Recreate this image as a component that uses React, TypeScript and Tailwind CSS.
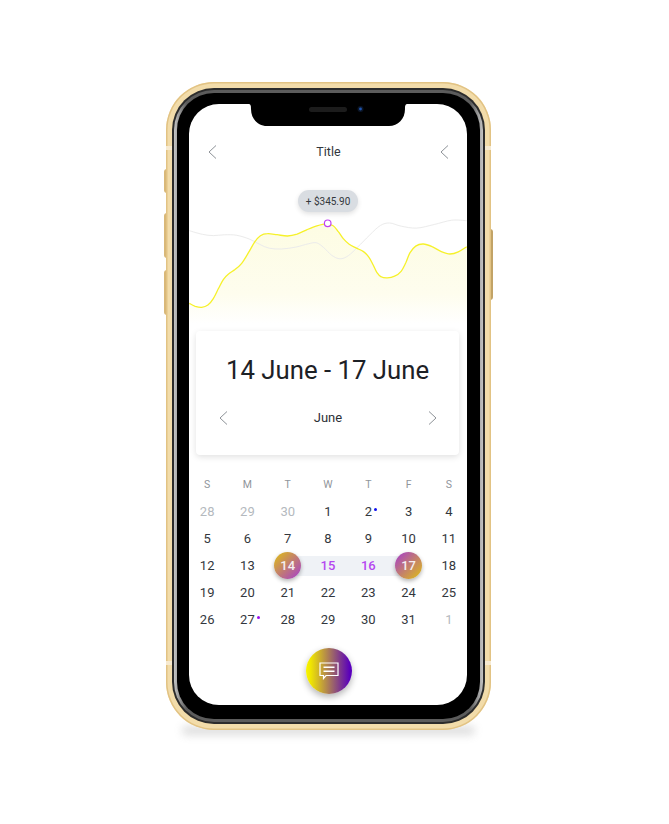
import React from "react";

type P = [number, number];

function smooth(points: P[]): string {
  let d = `M${points[0][0].toFixed(1)} ${points[0][1].toFixed(1)}`;
  for (let i = 0; i < points.length - 1; i++) {
    const p0 = points[Math.max(i - 1, 0)];
    const p1 = points[i];
    const p2 = points[i + 1];
    const p3 = points[Math.min(i + 2, points.length - 1)];
    const c1x = p1[0] + (p2[0] - p0[0]) / 6;
    const c1y = p1[1] + (p2[1] - p0[1]) / 6;
    const c2x = p2[0] - (p3[0] - p1[0]) / 6;
    const c2y = p2[1] - (p3[1] - p1[1]) / 6;
    d += ` C${c1x.toFixed(1)} ${c1y.toFixed(1)} ${c2x.toFixed(1)} ${c2y.toFixed(1)} ${p2[0].toFixed(1)} ${p2[1].toFixed(1)}`;
  }
  return d;
}

const toChart = (pts: P[]): P[] =>
  pts
    .map(([x, y]): P => [x / 3 - 29, y / 3 - 89])
    .map((p, i, a): P =>
      i === 0 || i === a.length - 1
        ? p
        : [0.25 * a[i - 1][0] + 0.5 * p[0] + 0.25 * a[i + 1][0], 0.25 * a[i - 1][1] + 0.5 * p[1] + 0.25 * a[i + 1][1]]
    );

const yellow = toChart([
  [88, 685], [105, 695], [125, 700], [145, 693], [160, 675], [175, 640], [190, 610], [205, 595], [225, 585],
  [245, 570], [265, 535], [285, 495], [300, 480], [320, 473], [350, 478], [385, 487], [410, 480], [440, 463],
  [470, 452], [503, 443], [520, 448], [535, 470], [550, 492], [565, 510], [590, 520], [612, 527], [628, 545],
  [640, 570], [650, 595], [662, 608], [680, 611], [705, 605], [725, 593], [738, 565], [748, 530], [765, 510],
  [790, 503], [815, 512], [845, 533], [870, 541], [895, 533], [920, 515],
]);
const gray = toChart([
  [88, 467], [130, 480], [160, 485], [190, 477], [230, 478], [270, 490], [300, 510], [325, 522], [360, 524],
  [410, 518], [450, 505], [470, 497], [490, 515], [515, 545], [540, 558], [565, 545], [590, 520], [630, 478],
  [665, 445], [685, 438], [720, 455], [770, 466], [820, 450], [880, 428], [920, 437],
]);

function Chev({ dir, className }: { dir: "l" | "r"; className?: string }) {
  return (
    <svg width="9" height="14" viewBox="0 0 9 14" fill="none" className={className}>
      <path d={dir === "l" ? "M8 0.5 L1 7 L8 13.5" : "M1 0.5 L8 7 L1 13.5"} stroke="#8d9297" strokeWidth="1" />
    </svg>
  );
}

function Chart() {
  const y = smooth(yellow);
  return (
    <svg width="278" height="167" viewBox="0 0 278 167" fill="none" className="block">
      <defs>
        <linearGradient id="area" x1="0" y1="0" x2="0" y2="1">
          <stop offset="0" stopColor="#fdfce3" />
          <stop offset="0.7" stopColor="#fefdee" />
          <stop offset="1" stopColor="#ffffff" />
        </linearGradient>
      </defs>
      <path d={`${y} L278.0 160 L0 160 Z`} fill="url(#area)" />
      <path d={smooth(gray)} stroke="#ebebeb" strokeWidth="1" />
      <path d={y} stroke="#f6f12a" strokeWidth="1.3" />
      <circle cx="138.7" cy="59.3" r="3.3" fill="#fff" stroke="#c03ff0" strokeWidth="1.2" />
    </svg>
  );
}

const rows: { t: string; k?: string }[][] = [
  [{ t: "28", k: "mute" }, { t: "29", k: "mute" }, { t: "30", k: "mute" }, { t: "1" }, { t: "2", k: "blue" }, { t: "3" }, { t: "4" }],
  [{ t: "5" }, { t: "6" }, { t: "7" }, { t: "8" }, { t: "9" }, { t: "10" }, { t: "11" }],
  [{ t: "12" }, { t: "13" }, { t: "14", k: "start" }, { t: "15", k: "mid" }, { t: "16", k: "mid" }, { t: "17", k: "end" }, { t: "18" }],
  [{ t: "19" }, { t: "20" }, { t: "21" }, { t: "22" }, { t: "23" }, { t: "24" }, { t: "25" }],
  [{ t: "26" }, { t: "27", k: "purple" }, { t: "28" }, { t: "29" }, { t: "30" }, { t: "31" }, { t: "1", k: "mute" }],
];

function Day({ t, k }: { t: string; k?: string }) {
  if (k === "start" || k === "end") {
    return (
      <div className="relative flex items-center justify-center">
        <div className={k === "start" ? "absolute left-1/2 right-0 top-[3.5px] h-[20px] bg-[#eff2f6]" : "absolute left-0 right-[20px] top-[3.5px] h-[20px] bg-[#eff2f6]"} />
        <div
          className={
            k === "start"
              ? "relative flex h-[27px] w-[27px] items-center justify-center rounded-full bg-[linear-gradient(135deg,#dfc010,#a53bd0)] text-[13px] font-medium text-[#f4eef0] shadow-[0_2px_4px_rgba(0,0,0,0.3)]"
              : "relative flex h-[27px] w-[27px] items-center justify-center rounded-full bg-[linear-gradient(135deg,#a53bd0,#dfc010)] text-[13px] font-medium text-[#f4eef0] shadow-[0_2px_4px_rgba(0,0,0,0.3)]"
          }
        >
          {t}
        </div>
      </div>
    );
  }
  if (k === "mid") {
    return <div className="my-[3.5px] flex items-center justify-center bg-[#eff2f6] text-[13px] font-medium text-[#b548f0]">{t}</div>;
  }
  return (
    <div className={k === "mute" ? "relative flex items-center justify-center text-[13px] text-[#b4b9be]" : "relative flex items-center justify-center text-[13px] font-[450] text-[#33373d]"}>
      <span className="relative">
        {t}
        {k === "blue" && <span className="absolute -right-[5px] top-[6px] h-[3px] w-[3px] rounded-full bg-[#1010f0]" />}
        {k === "purple" && <span className="absolute -right-[5px] top-[6px] h-[3px] w-[3px] rounded-full bg-[#9a10f0]" />}
      </span>
    </div>
  );
}

export default function App() {
  return (
    <div className="h-[824px] w-[669px] overflow-hidden bg-white pl-[166px] pt-[82px] font-['Roboto',sans-serif]">
      <div className="relative h-[648px] w-[325px]">
        {/* floor shadow */}
        <div className="absolute bottom-[-5px] left-[16px] right-[16px] h-[9px] rounded-full bg-[#8f8f8f] opacity-30 blur-[4px]" />
        {/* side buttons */}
        <div className="absolute -left-[2px] top-[87px] h-[24px] w-[3px] rounded-l-sm bg-[#d9b878]" />
        <div className="absolute -left-[2px] top-[131px] h-[45px] w-[3px] rounded-l-sm bg-[#d9b878]" />
        <div className="absolute -left-[2px] top-[188px] h-[45px] w-[3px] rounded-l-sm bg-[#d9b878]" />
        <div className="absolute -right-[2px] top-[147px] h-[71px] w-[3px] rounded-r-sm bg-[#c2a366]" />

        <div className="relative h-full rounded-[48px] bg-[#f2dcaa] p-[6px] shadow-[inset_0_0_0_1.5px_#e2c384]">
          {/* antenna bands */}
          <div className="absolute left-0 top-[64px] h-[4px] w-[6px] bg-[#f7ead0]" />
          <div className="absolute right-0 top-[64px] h-[4px] w-[6px] bg-[#f7ead0]" />
          <div className="absolute bottom-[65px] left-0 h-[4px] w-[6px] bg-[#f7ead0]" />
          <div className="absolute bottom-[65px] right-0 h-[4px] w-[6px] bg-[#f7ead0]" />
          <div className="h-full rounded-[42px] bg-[#2c2c2c] p-[2px]">
            <div className="h-full rounded-[40px] bg-[linear-gradient(90deg,#c4c4c4_0%,#5c5c5c_4%,#5c5c5c_96%,#c4c4c4_100%)] p-[3px]">
              <div className="h-full rounded-[37px] bg-black py-[11px] pl-[12px]">
                <div className="relative flex h-[601px] w-[278px] flex-col rounded-[30px] bg-white">
                  {/* notch */}
                  <svg width="160" height="23" viewBox="0 0 160 23" className="absolute left-[59px] top-0">
                    <path d="M0 0 H160 C157 0 157 2 157 5 C157 15 150 22 141 22 H19 C10 22 3 15 3 5 C3 2 3 0 0 0 Z" fill="#000" />
                    <rect x="61" y="3" width="38" height="5" rx="2.5" fill="#1c1c1c" />
                    <circle cx="112.5" cy="5" r="3" fill="#0b1526" />
                    <circle cx="112.5" cy="5" r="1.4" fill="#1f55b0" />
                  </svg>

                  <div className="mt-[36px] flex h-[24px] items-center justify-between pl-[19px] pr-[18px]">
                    <Chev dir="l" />
                    <span className="text-[12.5px] font-normal text-[#33373d]">Title</span>
                    <Chev dir="l" />
                  </div>

                  <div className="relative h-[167px]">
                    <Chart />
                    <div className="absolute left-[109px] top-[26px] flex h-[22px] w-[60px] items-center justify-center rounded-full bg-[#d9dde2] text-[10px] font-normal text-[#33373c] shadow-[0_2px_5px_rgba(0,0,0,0.12)]">
                      + $345.90
                    </div>
                  </div>

                  <div className="ml-[7px] mr-[8px] flex h-[124px] flex-col items-center rounded-[4px] bg-white shadow-[0_2px_6px_rgba(0,0,0,0.12)]">
                    <div className="mt-[22px] text-[25.75px] leading-[34px] text-[#1d2126]">14 June - 17 June</div>
                    <div className="mt-[21px] flex h-[20px] w-full items-center justify-between pl-[23px] pr-[22px]">
                      <Chev dir="l" />
                      <span className="text-[13px] text-[#2c3036]">June</span>
                      <Chev dir="r" />
                    </div>
                  </div>

                  <div className="-mx-[2px] mt-[16px] grid w-[282px] grid-cols-7 auto-rows-[27px]">
                    {["S", "M", "T", "W", "T", "F", "S"].map((d, i) => (
                      <div key={i} className="flex items-center justify-center text-[10.5px] text-[#90959b]">
                        {d}
                      </div>
                    ))}
                    {rows.flat().map((c, i) => (
                      <Day key={i} t={c.t} k={c.k} />
                    ))}
                  </div>

                  <div className="ml-[117px] mt-[15px] flex h-[46px] w-[46px] items-center justify-center rounded-full bg-[linear-gradient(90deg,#f8f500,#f0e600_10%,#5a00bc_95%)] shadow-[0_3px_7px_rgba(0,0,0,0.3)]">
                    <svg width="20" height="18" viewBox="0 0 20 18" fill="none">
                      <path d="M1 1 H19 V13.5 H7 L4.5 16.5 V13.5 H1 Z" stroke="#fff" strokeWidth="1.2" />
                      <path d="M4.5 5.2 H15.5 M4.5 9.2 H15.5" stroke="#fff" strokeWidth="1.5" />
                    </svg>
                  </div>
                </div>
              </div>
            </div>
          </div>
        </div>
      </div>
    </div>
  );
}
